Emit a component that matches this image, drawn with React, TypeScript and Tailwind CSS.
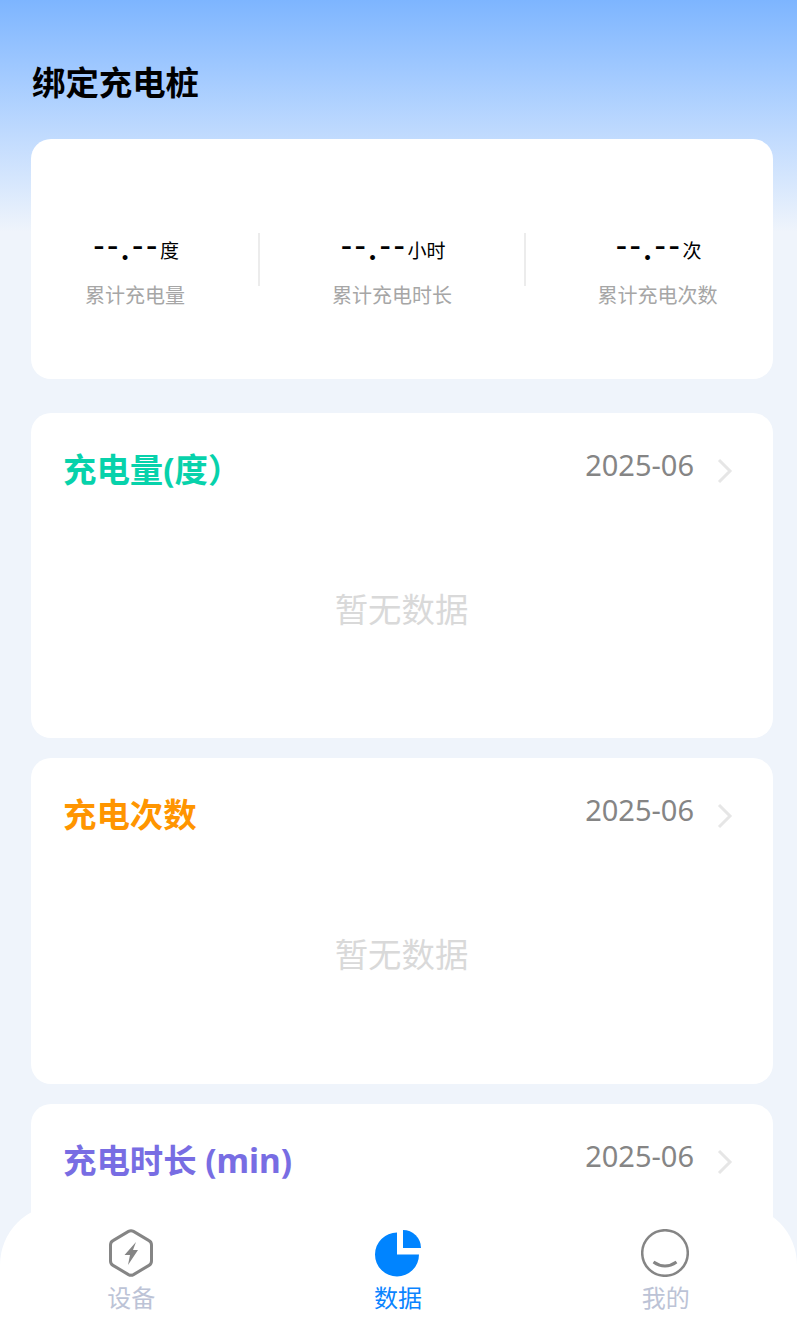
const font = "font-['Noto_Sans','Noto_Sans_CJK_SC',sans-serif]";

function Stat({ unit, label }: { unit: string; label: string }) {
  return (
    <>
      <div className="flex h-[30px] items-end text-black">
        <span className="mb-[2px] text-[33px] leading-[30px] font-['DejaVu_Sans_Mono',monospace] tracking-[-6px]">--</span>
        <span className="ml-[4.5px] mr-[-1px] text-[32px] leading-[30px] font-bold font-['Lato',sans-serif]">.</span>
        <span className="mb-[2px] text-[33px] leading-[30px] font-['DejaVu_Sans_Mono',monospace] tracking-[-6px]">--</span>
        <span className="mb-[-1px] ml-[4.5px] mr-[2px] text-[19px] leading-[26px]">{unit}</span>
      </div>
      <div className="mt-[20px] text-[20px] leading-[26px] text-[#a6a6a6]">{label}</div>
    </>
  );
}

function ChartCard({ title, color, height, empty = true }: { title: string; color: string; height: string; empty?: boolean }) {
  return (
    <div className={`rounded-[20px] bg-white pl-[32px] pr-[33px] ${height}`}>
      <div className="flex items-center justify-between pt-[32px]">
        <div className={`mb-[2px] text-[33.4px] leading-[48px] font-bold ${color}`}>{title}</div>
        <div className="mb-[10px] flex items-center">
          <span className="text-[29px] leading-[40px] text-[#858585]">2025-06</span>
          <svg width="16" height="26" viewBox="0 0 16 26" fill="none" className="ml-[23px] mr-[7px] mt-[12px]">
            <path d="M2 2l11 11L2 24" stroke="#e6e6e6" strokeWidth="3" />
          </svg>
        </div>
      </div>
      {empty && <div className="mt-[90px] text-center text-[33.4px] leading-[48px] text-[#d9d9d9]">暂无数据</div>}
    </div>
  );
}

function TabItem({ label, color, offset, children }: { label: string; color: string; offset?: string; children: React.ReactNode }) {
  return (
    <div className={`flex flex-1 flex-col items-center ${offset ?? ''}`}>
      {children}
      <div className={`mt-[5px] text-[24px] leading-[32px] ${color}`}>{label}</div>
    </div>
  );
}

export default function App() {
  return (
    <div className={`relative h-[1333px] overflow-hidden bg-[#eff4fb] ${font}`}>
      <div className="absolute inset-x-0 top-0 h-[232px] bg-gradient-to-b from-[#7db5ff] to-[#eff4fb]" />
      <div className="relative pl-[31px] pr-[24px]">
        <h1 className="pl-[1px] pt-[58px] pb-[2px] text-[33.4px] leading-[48px] font-bold text-black">绑定充电桩</h1>
        <div className="mt-[31px] flex h-[240px] rounded-[20px] bg-white pt-[94px]">
          <div className="flex w-[208px] flex-none flex-col items-center">
            <Stat unit="度" label="累计充电量" />
          </div>
          <div className="ml-[19px] h-[53px] w-[2px] flex-none bg-[#ececec]" />
          <div className="flex w-[264px] flex-none flex-col items-center">
            <Stat unit="小时" label="累计充电时长" />
          </div>
          <div className="h-[53px] w-[2px] flex-none bg-[#ececec]" />
          <div className="flex flex-1 flex-col items-center pl-[16px]">
            <Stat unit="次" label="累计充电次数" />
          </div>
        </div>
        <div className="mt-[34px] flex flex-col gap-[20px]">
          <ChartCard title="充电量(度）" color="text-[#07d2ab]" height="h-[325px]" />
          <ChartCard title="充电次数" color="text-[#ff9500]" height="h-[326px]" />
          <ChartCard title="充电时长 (min)" color="text-[#786de3]" height="h-[326px]" empty={false} />
        </div>
      </div>

      <div className="absolute inset-x-0 bottom-0 flex h-[128px] items-start rounded-t-[60px] bg-white pt-[24px]">
        <TabItem label="设备" color="text-[#bcc3d6]" offset="pr-[4px]">
          <svg width="46" height="48" viewBox="0 0 46 48" fill="none" className="mr-[1px]">
            <path d="M20.500 2.400Q23 1 25.500 2.400L41 11.600Q43.500 13 43.500 16V32Q43.500 35 41 36.400L25.500 45.600Q23 47 20.500 45.600L5 36.400Q2.500 35 2.500 32V16Q2.500 13 5 11.600Z" stroke="#858585" strokeWidth="3" />
            <path d="M28 13L16.500 26H22L20 36 30 21H25z" fill="#858585" />
          </svg>
        </TabItem>
        <TabItem label="数据" color="text-[#0a84ff]" offset="pr-[5px]">
          <svg width="48" height="48" viewBox="0 0 48 48">
            <path d="M23 3.500A22 22 0 1 0 45 25.500H23z" fill="#0084ff" />
            <path d="M29 1A18 18 0 0 1 47 19H29z" fill="#0084ff" />
          </svg>
        </TabItem>
        <TabItem label="我的" color="text-[#bcc3d6]">
          <svg width="48" height="48" viewBox="0 0 48 48" fill="none" className="mr-[1px]">
            <circle cx="24" cy="24" r="22.800" stroke="#858585" strokeWidth="2.500" />
            <path d="M12.500 33Q24 41 35.500 33" stroke="#858585" strokeWidth="3" />
          </svg>
        </TabItem>
      </div>
    </div>
  );
}
